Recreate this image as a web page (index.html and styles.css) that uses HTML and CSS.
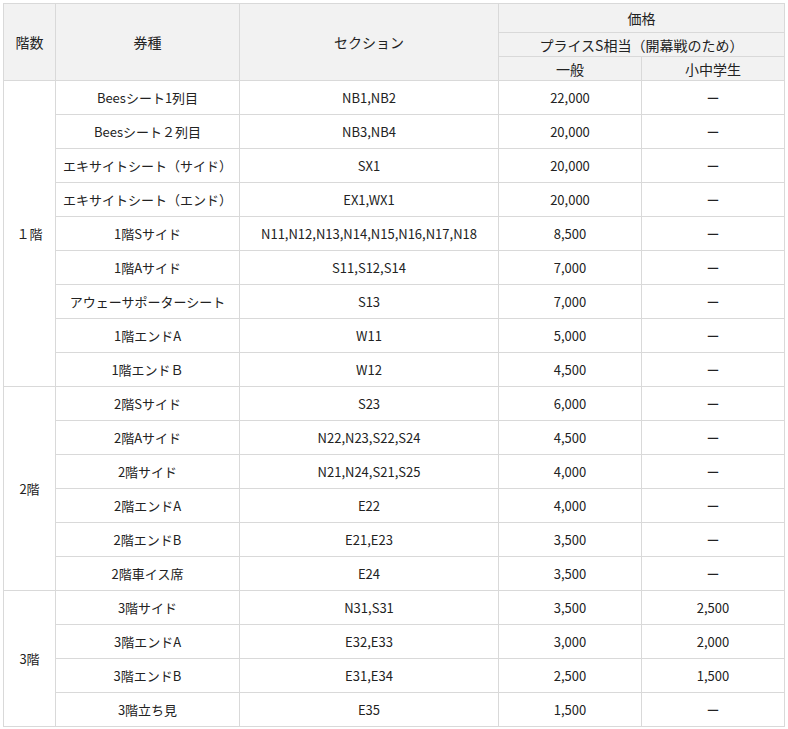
FILE: index.html
```html
<!DOCTYPE html>
<html lang="ja">
<head>
<meta charset="utf-8">
<link rel="stylesheet" href="styles.css">
</head>
<body>
<div class="wrap">
<table class="price">
<colgroup>
<col class="c1"><col class="c2"><col class="c3"><col class="c4"><col class="c5">
</colgroup>
<thead>
<tr class="h1">
<th rowspan="3">階数</th>
<th rowspan="3">券種</th>
<th rowspan="3">セクション</th>
<th colspan="2">価格</th>
</tr>
<tr class="h2"><th colspan="2">プライスS相当（開幕戦のため）</th></tr>
<tr class="h3"><th>一般</th><th>小中学生</th></tr>
</thead>
<tbody>
<tr><td rowspan="9">１階</td><td>Beesシート1列目</td><td>NB1,NB2</td><td>22,000</td><td>ー</td></tr>
<tr><td>Beesシート２列目</td><td>NB3,NB4</td><td>20,000</td><td>ー</td></tr>
<tr><td>エキサイトシート（サイド）</td><td>SX1</td><td>20,000</td><td>ー</td></tr>
<tr><td>エキサイトシート（エンド）</td><td>EX1,WX1</td><td>20,000</td><td>ー</td></tr>
<tr><td>1階Sサイド</td><td>N11,N12,N13,N14,N15,N16,N17,N18</td><td>8,500</td><td>ー</td></tr>
<tr><td>1階Aサイド</td><td>S11,S12,S14</td><td>7,000</td><td>ー</td></tr>
<tr><td>アウェーサポーターシート</td><td>S13</td><td>7,000</td><td>ー</td></tr>
<tr><td>1階エンドA</td><td>W11</td><td>5,000</td><td>ー</td></tr>
<tr><td>1階エンドＢ</td><td>W12</td><td>4,500</td><td>ー</td></tr>
<tr><td rowspan="6">2階</td><td>2階Sサイド</td><td>S23</td><td>6,000</td><td>ー</td></tr>
<tr><td>2階Aサイド</td><td>N22,N23,S22,S24</td><td>4,500</td><td>ー</td></tr>
<tr><td>2階サイド</td><td>N21,N24,S21,S25</td><td>4,000</td><td>ー</td></tr>
<tr><td>2階エンドA</td><td>E22</td><td>4,000</td><td>ー</td></tr>
<tr><td>2階エンドB</td><td>E21,E23</td><td>3,500</td><td>ー</td></tr>
<tr><td>2階車イス席</td><td>E24</td><td>3,500</td><td>ー</td></tr>
<tr><td rowspan="4">3階</td><td>3階サイド</td><td>N31,S31</td><td>3,500</td><td>2,500</td></tr>
<tr><td>3階エンドA</td><td>E32,E33</td><td>3,000</td><td>2,000</td></tr>
<tr><td>3階エンドB</td><td>E31,E34</td><td>2,500</td><td>1,500</td></tr>
<tr><td>3階立ち見</td><td>E35</td><td>1,500</td><td>ー</td></tr>
</tbody>
</table>
</div>
</body>
</html>
```
FILE: styles.css
```css
html, body {
  margin: 0;
  padding: 0;
  background: #fff;
}
.wrap {
  padding: 3px 3px 0 3px;
}
.price {
  width: 782px;
  border-collapse: collapse;
  table-layout: fixed;
  font-family: "Noto Sans CJK JP", "Noto Sans", sans-serif;
  font-size: 13px;
  color: #222;
}
.c1 { width: 52px; }
.c2 { width: 184px; }
.c3 { width: 259px; }
.c4 { width: 143px; }
.c5 { width: 143px; }
.price th, .price td {
  border: 1px solid #d9d9d9;
  text-align: center;
  vertical-align: middle;
  padding: 0 4px;
  font-weight: normal;
  line-height: 18px;
}
.price th {
  background: #f2f2f2;
  font-size: 14px;
}
.h1 th { height: 28px; }
.h2 th { height: 23px; }
.h3 th { height: 23px; }
.price td {
  height: 33px;
}
```
